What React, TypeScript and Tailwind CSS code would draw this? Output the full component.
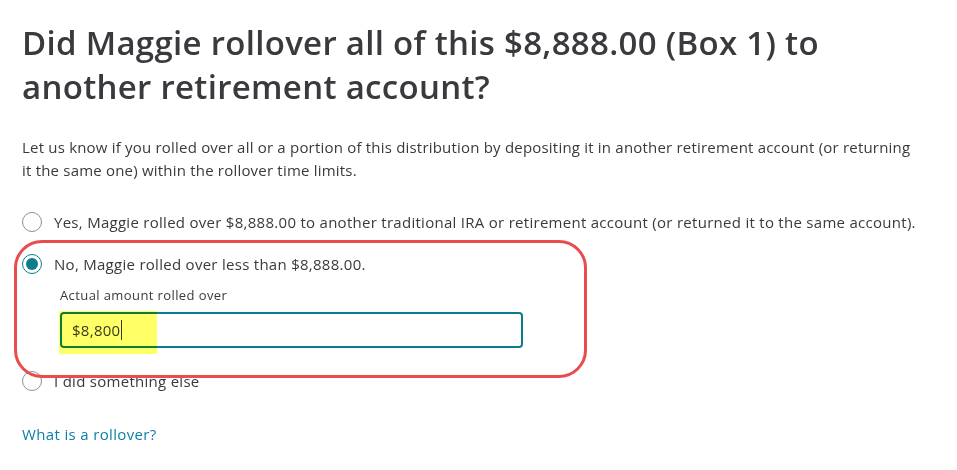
import React from 'react';

function Radio({ checked }: { checked?: boolean }) {
    return (
        <span className={`flex h-[20px] w-[20px] shrink-0 items-center justify-center rounded-full border ${checked ? 'border-[#0a7d8c] border-[1.5px]' : 'border-[#8d9096]'}`}>
            {checked && <span className="h-[12px] w-[12px] rounded-full bg-[#0a7d8c]" />}
        </span>
    );
}

export default function App() {
    return (
        <div className="relative h-[470px] w-[957px] overflow-hidden bg-white pl-[22px] pt-[21px] text-[#393a3d] tracking-[0.28px] font-['Open_Sans',sans-serif]">
            <h1 className="w-[900px] text-[33px] font-semibold leading-[44px] tracking-[0.3px] text-[#393a3d]">
                Did Maggie rollover all of this $8,888.00 (Box 1) to another retirement account?
            </h1>

            <p className="mt-[27px] w-[895px] text-[15px] leading-[23px] tracking-[0.2px]">
                Let us know if you rolled over all or a portion of this distribution by depositing it in another retirement account (or returning it the same one) within the rollover time limits.
            </p>

            <div className="mt-[27px] flex flex-col">
                <label className="flex h-[26px] items-center gap-[12px]">
                    <Radio />
                    <span className="text-[15px]">Yes, Maggie rolled over $8,888.00 to another traditional IRA or retirement account (or returned it to the same account).</span>
                </label>
                <label className="mt-[16px] flex h-[26px] items-center gap-[12px]">
                    <Radio checked />
                    <span className="text-[15px]">No, Maggie rolled over less than $8,888.00.</span>
                </label>
                <div className="ml-[38px] mt-[10px]">
                    <div className="text-[13px] leading-[16px] tracking-[0.4px]">Actual amount rolled over</div>
                    <div className="mt-[9px] flex h-[36px] w-[463px] items-center rounded-[4px] border-2 border-[#0a7d8c] pl-[10px] text-[15px]">
                        <span>$8,800</span>
                        <span className="ml-[1px] h-[20px] w-px bg-[#393a3d]" />
                    </div>
                </div>
                <label className="mt-[20px] flex h-[26px] items-center gap-[12px]">
                    <Radio />
                    <span className="text-[15px]">I did something else</span>
                </label>
            </div>

            <a className="mt-[29px] block text-[15px] tracking-[0.35px] text-[#0d7fa8]">What is a rollover?</a>

            {/* annotation highlight over the amount */}
            <div className="absolute left-[59px] top-[311px] h-[43px] w-[98px] bg-[#ffff33]/75 mix-blend-multiply" />
            {/* red annotation box */}
            <div className="absolute left-[14px] top-[240px] h-[138px] w-[573px] rounded-[28px] border-[3px] border-[#e84c4c]" />
        </div>
    );
}
